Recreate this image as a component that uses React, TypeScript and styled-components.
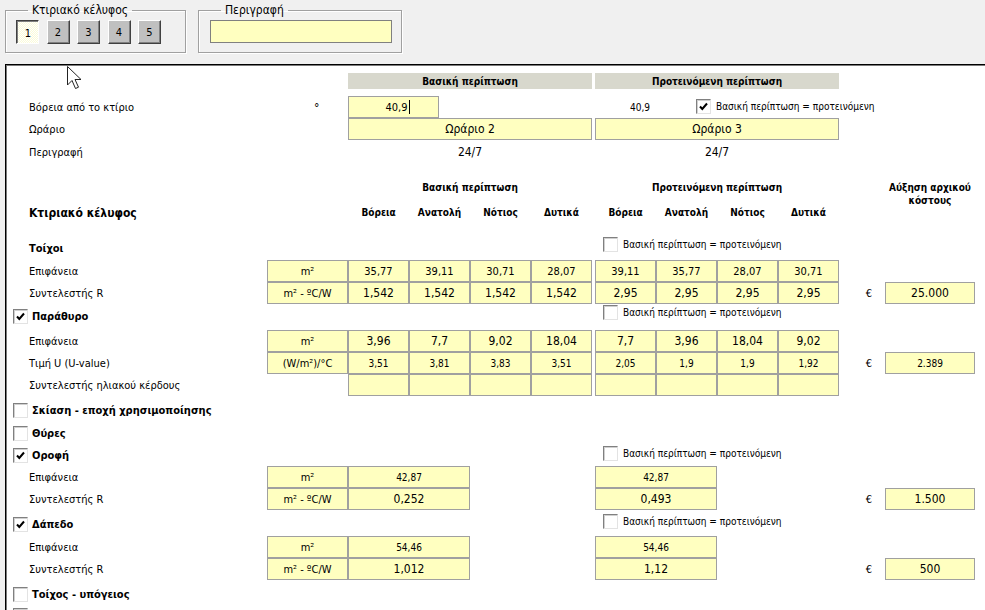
import React from "react";
import styled, { createGlobalStyle } from "styled-components";

const FONT = `"DejaVu Sans Condensed", "Liberation Sans", "DejaVu Sans", sans-serif`;
const YELLOW = "#ffffc0";
const CELL_BORDER = "#a0a0a0";
const COLS = "261px 81px repeat(4, 61px) 3px repeat(4, 61px) 46px 90px";

const GlobalStyle = createGlobalStyle`
  html, body {
    margin: 0;
    padding: 0;
    background: #f0f0f0;
  }
  body {
    font-family: ${FONT};
    font-size: 11px;
    color: #000;
  }
  * {
    box-sizing: border-box;
  }
`;

const Page = styled.div`
  width: 985px;
  height: 610px;
  overflow: hidden;
  background: #f0f0f0;
  display: flex;
  flex-direction: column;
`;

const TopBar = styled.div`
  flex: none;
  display: flex;
  gap: 12px;
  padding: 3px 0 0 5px;
  height: 64px;
`;

const GroupBox = styled.fieldset<{ w: number }>`
  margin: 0;
  padding: 3px 0 0 10px;
  min-width: 0;
  width: ${(p) => p.w}px;
  height: 50px;
  border: 1px solid #a0a0a0;
  box-shadow: inset 1px 1px 0 #fff, 1px 1px 0 #fff;
  display: flex;
  align-items: flex-start;
`;

const GroupTitle = styled.legend`
  margin-left: 12px;
  padding: 0 4px;
  font-size: 12px;
  line-height: 14px;
  color: #000;
`;

const TabButtons = styled.div`
  display: flex;
  gap: 7.5px;
`;

const TabButton = styled.div<{ active?: boolean }>`
  width: 23px;
  height: 24px;
  display: flex;
  align-items: center;
  justify-content: center;
  font-size: 11px;
  padding-top: ${(p) => (p.active ? 3 : 0)}px;
  padding-left: ${(p) => (p.active ? 1 : 0)}px;
  border: 1px solid;
  border-color: ${(p) =>
    p.active ? "#404040 #fff #fff #404040" : "#fff #404040 #404040 #fff"};
  box-shadow: ${(p) =>
    p.active ? "inset 1px 1px 0 #808080" : "inset -1px -1px 0 #808080"};
  background: ${(p) =>
    p.active
      ? "repeating-conic-gradient(#fbfbd8 0 25%, #ffffff 0 50%) 0 0 / 2px 2px"
      : "#c0c0c0"};
`;

const DescInput = styled.div`
  margin-left: 1px;
  width: 182px;
  height: 23px;
  background: ${YELLOW};
  border: 1px solid #808080;
`;

const Panel = styled.div`
  position: relative;
  flex: 1;
  margin-left: 5px;
  background: #fff;
  border-top: 1px solid #000;
  border-left: 1px solid #000;
  box-shadow: inset 1px 1px 0 #7a7a7a;
`;

const Cursor = styled.svg`
  position: absolute;
  left: 61px;
  top: 1px;
`;

const Row = styled.div<{ h: number; mt?: number }>`
  display: grid;
  grid-template-columns: ${COLS};
  grid-auto-rows: ${(p) => p.h}px;
  margin-top: ${(p) => p.mt ?? 0}px;
`;

const HeaderBar = styled.div<{ col: string }>`
  grid-column: ${(p) => p.col};
  background: #d8d8cd;
  font-weight: bold;
  font-size: 10px;
  display: flex;
  align-items: center;
  justify-content: center;
`;

const RowLabel = styled.div`
  grid-column: 1;
  padding-left: 23px;
  align-self: center;
  white-space: nowrap;
`;

const Degree = styled.div`
  grid-column: 2;
  align-self: start;
  padding: 7px 0 0 47px;
  font-size: 12px;
  line-height: 10px;
`;

const Cell = styled.div<{ col: string; size?: number; w?: number; pl?: number }>`
  grid-column: ${(p) => p.col};
  ${(p) => (p.w ? `width: ${p.w}px;` : "")}
  padding-left: ${(p) => p.pl ?? 0}px;
  background: ${YELLOW};
  border: 1px solid ${CELL_BORDER};
  display: flex;
  align-items: center;
  justify-content: center;
  font-size: ${(p) => p.size ?? 12}px;
  white-space: nowrap;
`;

const Caret = styled.span`
  display: inline-block;
  width: 1px;
  height: 14px;
  margin-left: 1px;
  background: #000;
`;

const PlainValue = styled.div<{ col: string; size?: number; pr?: number }>`
  grid-column: ${(p) => p.col};
  align-self: center;
  justify-self: ${(p) => (p.pr !== undefined ? "end" : "center")};
  padding-right: ${(p) => p.pr ?? 0}px;
  font-size: ${(p) => p.size ?? 12}px;
`;

const HeadBlock = styled.div`
  display: grid;
  grid-template-columns: ${COLS};
  grid-template-rows: 25px 13px;
  padding-top: 17px;
  height: 70px;
`;

const CaseTitle = styled.div<{ col: string }>`
  grid-column: ${(p) => p.col};
  grid-row: 1;
  text-align: center;
  font-weight: bold;
  font-size: 10px;
  line-height: 13px;
`;

const CostTitle = styled.div`
  grid-column: 12 / span 2;
  grid-row: 1;
  padding-left: 46px;
  text-align: center;
  font-weight: bold;
  font-size: 10px;
  line-height: 13px;
`;

const ColName = styled.div<{ col: number }>`
  grid-column: ${(p) => p.col};
  grid-row: 2;
  text-align: center;
  font-weight: bold;
  font-size: 10px;
  line-height: 13px;
`;

const EnvelopeTitle = styled.div`
  grid-column: 1;
  grid-row: 2;
  padding-left: 23px;
  font-weight: bold;
  font-size: 12px;
  line-height: 15px;
`;

const SectionRow = styled.div<{ h: number }>`
  display: grid;
  grid-template-columns: ${COLS};
  height: ${(p) => p.h}px;
`;

const SectionLeft = styled.div<{ top: number; indent: number }>`
  grid-column: 1;
  align-self: start;
  margin-top: ${(p) => p.top}px;
  padding-left: ${(p) => p.indent}px;
  display: flex;
  align-items: center;
  gap: 4px;
  height: 15px;
  font-weight: bold;
  white-space: nowrap;
`;

const SameAs = styled.div<{ col: string; top: number; pl: number }>`
  grid-column: ${(p) => p.col};
  align-self: start;
  margin-top: ${(p) => p.top}px;
  padding-left: ${(p) => p.pl}px;
  display: flex;
  align-items: center;
  gap: 5px;
  height: 15px;
  font-size: 10px;
  white-space: nowrap;
`;

const Box = styled.div`
  width: 15px;
  height: 15px;
  flex: none;
  background: #fff;
  border: 1px solid;
  border-color: #808080 #e3e3e3 #e3e3e3 #808080;
  box-shadow: inset 1px 1px 0 #d0d0d0;
  display: flex;
  align-items: center;
  justify-content: center;
`;

const Euro = styled.div`
  grid-column: 12;
  align-self: center;
  justify-self: end;
  padding-right: 13px;
  font-size: 11px;
`;

const Check = ({ on }: { on?: boolean }) => (
  <Box>
    {on && (
      <svg width="11" height="11" viewBox="0 0 11 11">
        <path d="M2 5.5 L4.3 8 L9 2.5" fill="none" stroke="#000" strokeWidth="2" />
      </svg>
    )}
  </Box>
);

type GridRow = {
  label: string;
  unit?: string;
  base: string[];
  prop: string[];
  size?: number;
  cost?: string;
  costSize?: number;
};

const DataRow = ({ r }: { r: GridRow }) => (
  <Row h={22}>
    <RowLabel>{r.label}</RowLabel>
    {r.unit && (
      <Cell col="2" size={11}>
        {r.unit}
      </Cell>
    )}
    {r.base.length === 1 ? (
      <Cell col="3 / span 2" size={r.size}>
        {r.base[0]}
      </Cell>
    ) : (
      r.base.map((v, i) => (
        <Cell key={"b" + i} col={String(3 + i)} size={r.size}>
          {v}
        </Cell>
      ))
    )}
    {r.prop.length === 1 ? (
      <Cell col="8 / span 2" size={r.size}>
        {r.prop[0]}
      </Cell>
    ) : (
      r.prop.map((v, i) => (
        <Cell key={"p" + i} col={String(8 + i)} size={r.size}>
          {v}
        </Cell>
      ))
    )}
    {r.cost && (
      <>
        <Euro>€</Euro>
        <Cell col="13" size={r.costSize}>
          {r.cost}
        </Cell>
      </>
    )}
  </Row>
);

const walls: GridRow[] = [
  { label: "Επιφάνεια", unit: "m²", base: ["35,77", "39,11", "30,71", "28,07"], prop: ["39,11", "35,77", "28,07", "30,71"], size: 11 },
  { label: "Συντελεστής R", unit: "m² - ºC/W", base: ["1,542", "1,542", "1,542", "1,542"], prop: ["2,95", "2,95", "2,95", "2,95"], cost: "25.000" },
];

const windows: GridRow[] = [
  { label: "Επιφάνεια", unit: "m²", base: ["3,96", "7,7", "9,02", "18,04"], prop: ["7,7", "3,96", "18,04", "9,02"] },
  { label: "Τιμή U (U-value)", unit: "(W/m²)/°C", base: ["3,51", "3,81", "3,83", "3,51"], prop: ["2,05", "1,9", "1,9", "1,92"], size: 10, cost: "2.389", costSize: 10 },
  { label: "Συντελεστής ηλιακού κέρδους", base: ["", "", "", ""], prop: ["", "", "", ""] },
];

const roof: GridRow[] = [
  { label: "Επιφάνεια", unit: "m²", base: ["42,87"], prop: ["42,87"], size: 10 },
  { label: "Συντελεστής R", unit: "m² - ºC/W", base: ["0,252"], prop: ["0,493"], cost: "1.500" },
];

const floor: GridRow[] = [
  { label: "Επιφάνεια", unit: "m²", base: ["54,46"], prop: ["54,46"], size: 10 },
  { label: "Συντελεστής R", unit: "m² - ºC/W", base: ["1,012"], prop: ["1,12"], cost: "500" },
];

const directions = ["Βόρεια", "Ανατολή", "Νότιος", "Δυτικά"];
const SAME = "Βασική περίπτωση = προτεινόμενη";

type SectionProps = {
  h: number;
  label: string;
  checkbox?: boolean;
  checked?: boolean;
  leftTop: number;
  sameTop?: number;
};

const Section = ({ h, label, checkbox = true, checked, leftTop, sameTop }: SectionProps) => (
  <SectionRow h={h}>
    <SectionLeft top={leftTop} indent={checkbox ? 7 : 23}>
      {checkbox && <Check on={checked} />}
      <span>{label}</span>
    </SectionLeft>
    {sameTop !== undefined && (
      <SameAs col="8 / span 5" top={sameTop} pl={8}>
        <Check />
        <span>{SAME}</span>
      </SameAs>
    )}
  </SectionRow>
);

export default function App() {
  return (
    <Page>
      <GlobalStyle />
      <TopBar>
        <GroupBox w={181}>
          <GroupTitle>Κτιριακό κέλυφος</GroupTitle>
          <TabButtons>
            {[1, 2, 3, 4, 5].map((n) => (
              <TabButton key={n} active={n === 1}>
                {n}
              </TabButton>
            ))}
          </TabButtons>
        </GroupBox>
        <GroupBox w={204}>
          <GroupTitle>Περιγραφή</GroupTitle>
          <DescInput />
        </GroupBox>
      </TopBar>

      <Panel>
        <Cursor width="16" height="25" viewBox="0 0 16 25">
          <path
            d="M0.5 0.5 L0.5 19 L5 14.5 L8.5 22.5 L11.5 21.2 L8 13.5 L14 13.5 Z"
            fill="#fff"
            stroke="#222"
            strokeWidth="1"
          />
        </Cursor>

        <Row h={16} mt={8}>
          <HeaderBar col="3 / span 4">Βασική περίπτωση</HeaderBar>
          <HeaderBar col="8 / span 4">Προτεινόμενη περίπτωση</HeaderBar>
        </Row>

        <Row h={22} mt={7}>
          <RowLabel>Βόρεια από το κτίριο</RowLabel>
          <Degree>°</Degree>
          <Cell col="3 / span 2" w={91} size={11} pl={8}>
            40,9
            <Caret />
          </Cell>
          <PlainValue col="8" size={10} pr={6}>
            40,9
          </PlainValue>
          <SameAs col="9 / span 5" top={3} pl={40}>
            <Check on />
            <span>{SAME}</span>
          </SameAs>
        </Row>
        <Row h={22}>
          <RowLabel>Ωράριο</RowLabel>
          <Cell col="3 / span 4">Ωράριο 2</Cell>
          <Cell col="8 / span 4">Ωράριο 3</Cell>
        </Row>
        <Row h={24}>
          <RowLabel>Περιγραφή</RowLabel>
          <PlainValue col="3 / span 4">24/7</PlainValue>
          <PlainValue col="8 / span 4">24/7</PlainValue>
        </Row>

        <HeadBlock>
          <CaseTitle col="3 / span 4">Βασική περίπτωση</CaseTitle>
          <CaseTitle col="8 / span 4">Προτεινόμενη περίπτωση</CaseTitle>
          <CostTitle>
            Αύξηση αρχικού
            <br />
            κόστους
          </CostTitle>
          <EnvelopeTitle>Κτιριακό κέλυφος</EnvelopeTitle>
          {directions.map((d, i) => (
            <ColName key={"b" + d} col={3 + i}>
              {d}
            </ColName>
          ))}
          {directions.map((d, i) => (
            <ColName key={"p" + d} col={8 + i}>
              {d}
            </ColName>
          ))}
        </HeadBlock>

        <Section h={26} label="Τοίχοι" checkbox={false} leftTop={7} sameTop={3} />
        {walls.map((r) => (
          <DataRow key={r.label} r={r} />
        ))}

        <Section h={26} label="Παράθυρο" checked leftTop={5} sameTop={1} />
        {windows.map((r) => (
          <DataRow key={r.label} r={r} />
        ))}

        <Section h={24} label="Σκίαση - εποχή χρησιμοποίησης" leftTop={7} />
        <Section h={23} label="Θύρες" leftTop={6} />

        <Section h={23} label="Οροφή" checked leftTop={5} sameTop={3} />
        {roof.map((r) => (
          <DataRow key={r.label} r={r} />
        ))}

        <Section h={26} label="Δάπεδο" checked leftTop={7} sameTop={4} />
        {floor.map((r) => (
          <DataRow key={r.label} r={r} />
        ))}

        <Section h={21} label="Τοίχος - υπόγειος" leftTop={7} />
        <Section h={20} label="" leftTop={7} />
      </Panel>
    </Page>
  );
}
